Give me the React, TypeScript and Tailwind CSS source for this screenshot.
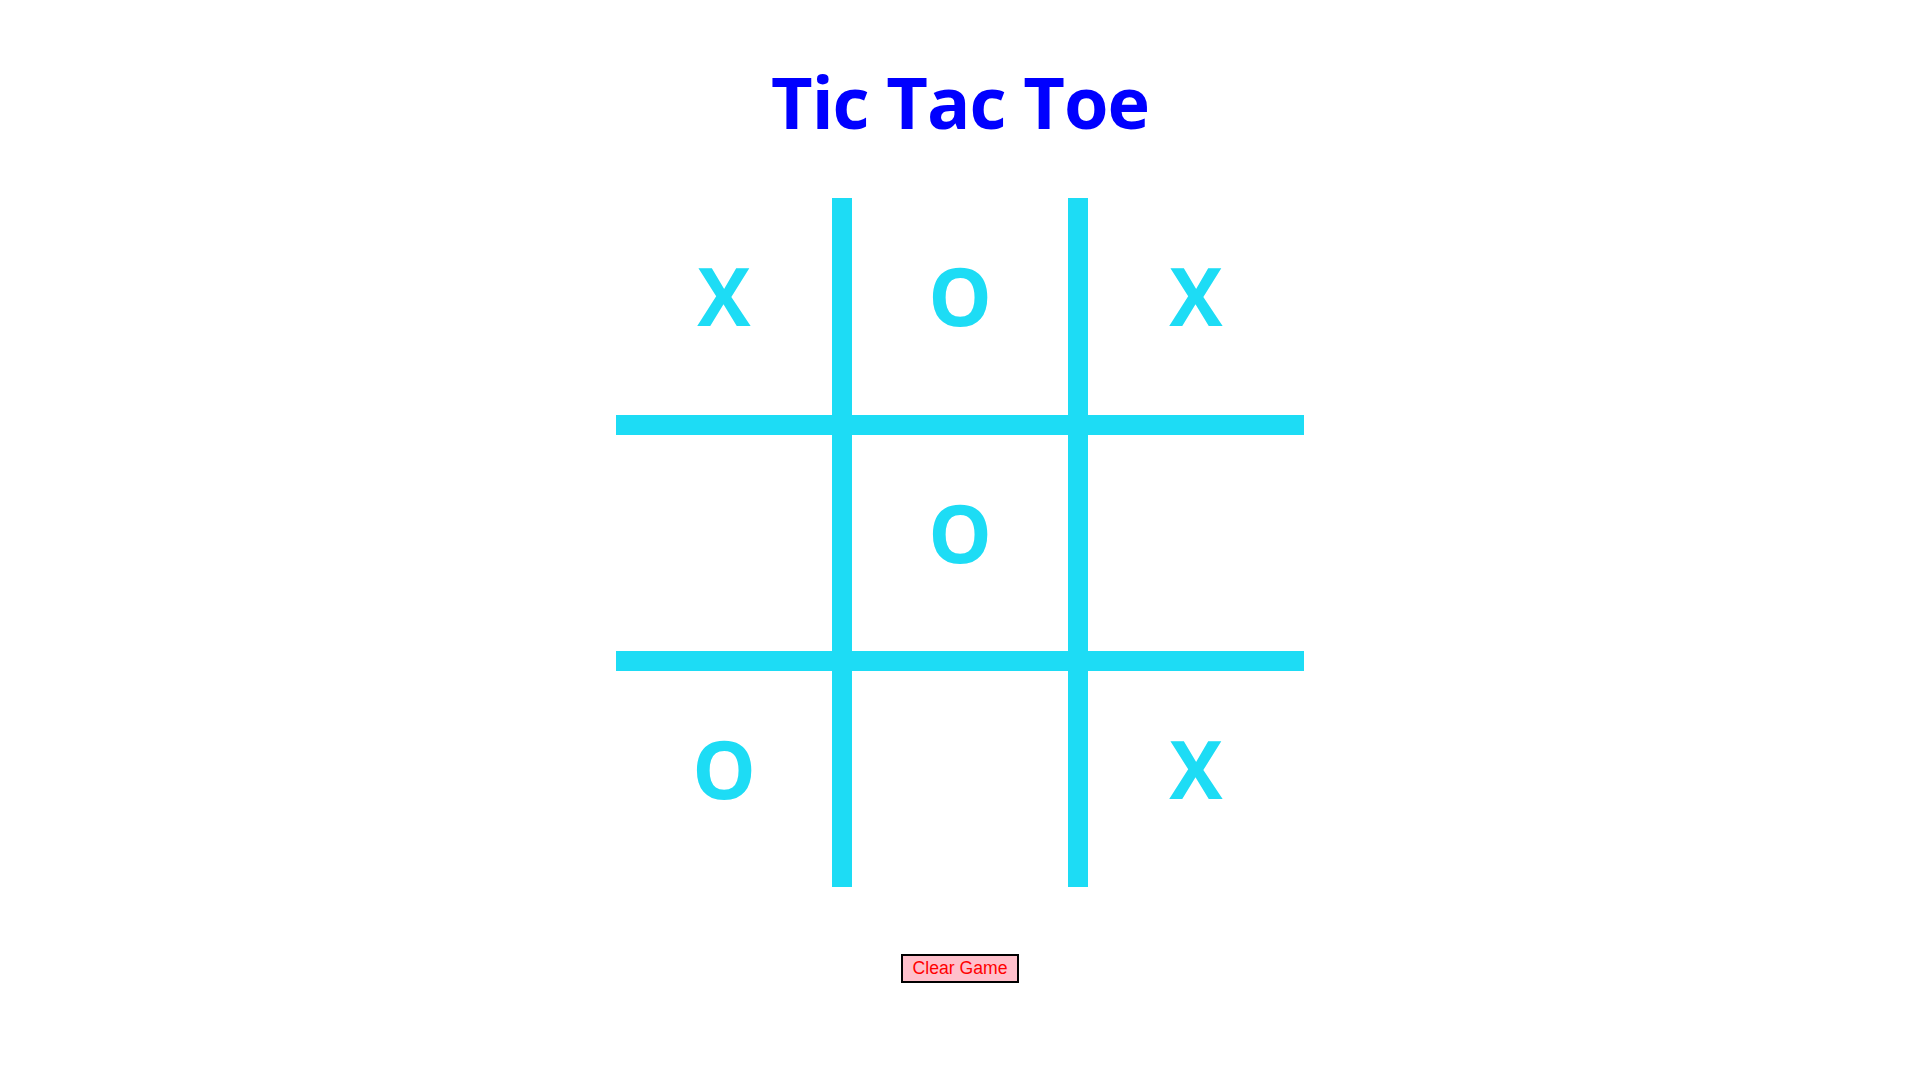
import { useState } from 'react';

type Mark = 'X' | 'O' | '';

// Board as shown in the reference
const initialBoard: Mark[] = ['X', 'O', 'X', '', 'O', '', 'O', '', 'X'];

function Cell({ value, onClick }: { value: Mark; onClick: () => void }) {
  return (
    <div
      className="bg-white flex items-center justify-center pb-[23px] cursor-pointer select-none"
      onClick={onClick}
    >
      <span className="text-[80px] leading-none font-bold text-[#1ddcf5] font-['Open_Sans',sans-serif]">
        {value}
      </span>
    </div>
  );
}

export default function App() {
  const [board, setBoard] = useState<Mark[]>(initialBoard);
  const [turn, setTurn] = useState<'X' | 'O'>('X');

  const play = (i: number) => {
    if (board[i]) return;
    const next = [...board];
    next[i] = turn;
    setBoard(next);
    setTurn(turn === 'X' ? 'O' : 'X');
  };

  return (
    <div className="min-h-screen bg-white flex flex-col items-center">
      <h1 className="mt-[65px] text-[72px] leading-none tracking-[-1px] font-bold text-[#0000ff] font-['Open_Sans',sans-serif]">
        Tic Tac Toe
      </h1>

      {/* ── Board: cyan gaps act as the grid lines ── */}
      <div className="mt-[61px] grid grid-cols-[repeat(3,216px)] grid-rows-[217px_216px_216px] gap-[20px] bg-[#1ddcf5]">
        {board.map((v, i) => (
          <Cell key={i} value={v} onClick={() => play(i)} />
        ))}
      </div>

      <button
        className="mt-[67px] border-2 border-black bg-[#ffc0cb] text-[#ff0000] px-[10px] py-[2px] text-[17.6px] leading-[21px] font-['Liberation_Sans',Arial,sans-serif] cursor-pointer"
        onClick={() => {
          setBoard(['', '', '', '', '', '', '', '', '']);
          setTurn('X');
        }}
      >
        Clear Game
      </button>
    </div>
  );
}
